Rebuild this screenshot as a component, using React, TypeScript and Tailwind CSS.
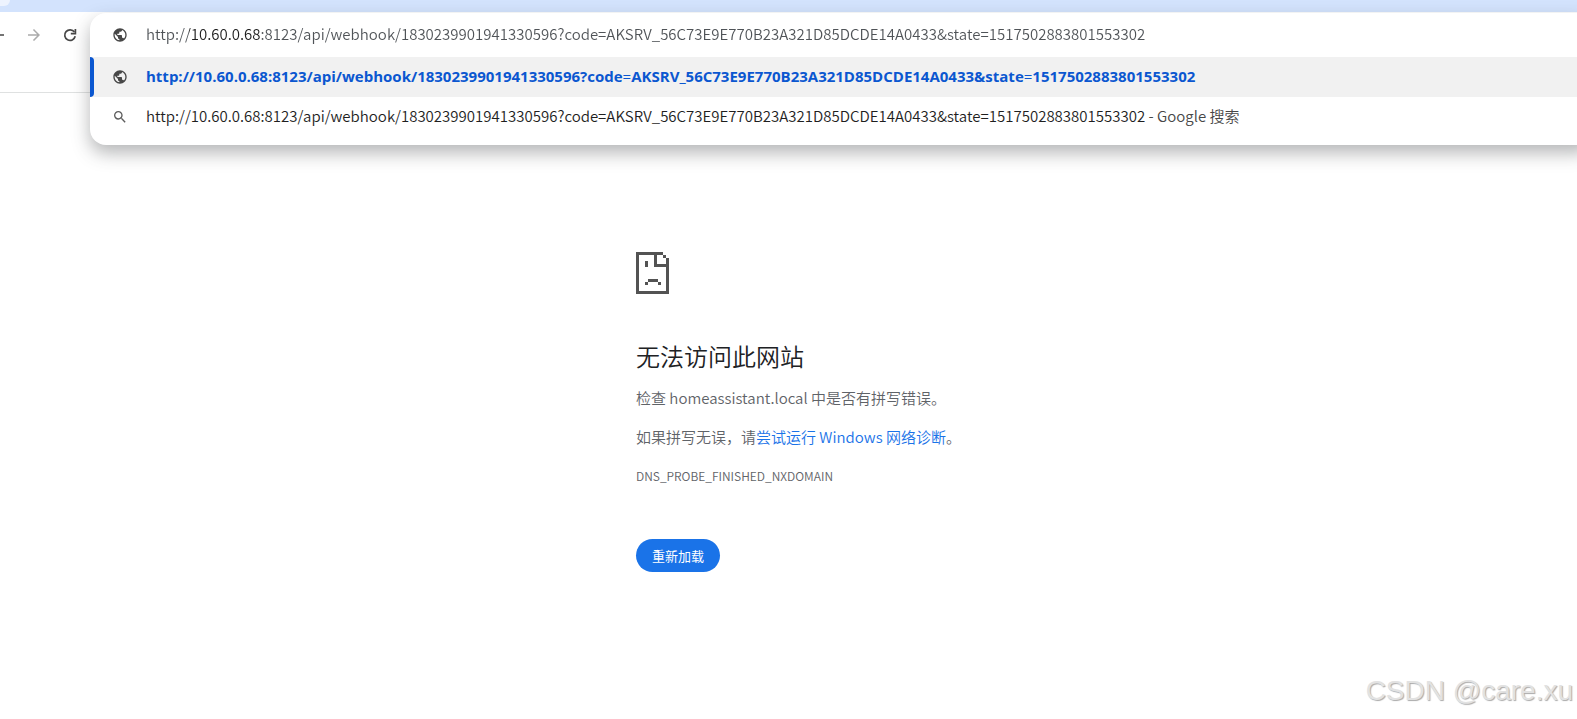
import { useState } from 'react';
import { MdArrowBack, MdArrowForward, MdPublic, MdSearch } from 'react-icons/md';

const TARGET_URL =
  'http://10.60.0.68:8123/api/webhook/1830239901941330596?code=AKSRV_56C73E9E770B23A321D85DCDE14A0433&state=1517502883801553302';

function ReloadIcon() {
  return (
    <svg viewBox="0 0 18 18" className="size-[18px]" fill="none" stroke="currentColor" strokeWidth="1.7">
      <path d="M14.2 10.3A5.3 5.3 0 1 1 13.4 6.1" />
      <path d="M14.4 3v4.6H9.8" />
    </svg>
  );
}

function SadPageIcon() {
  return (
    <svg viewBox="0 0 33 42" className="h-[42px] w-[33px]" fill="#535353" shapeRendering="crispEdges" aria-hidden="true">
      <path d="M0 0h27v3H0zM0 3h3v39H0zM3 39h30v3H3zM30 6h3v33h-3zM27 3h3v3h-3zM18 3h3v9h-3zM18 12h12v3H18z" />
      <path d="M9 9h3v6H9zM12 27h10v3H12zM9 30h3v3H9zM22 30h3v3h-3z" />
    </svg>
  );
}

function BrowserBar() {
  return (
    <header className="relative z-10">
      <div className="h-3 overflow-hidden bg-[#d3e3fd]">
        <div className="h-[6px] w-[10px] rounded-br-[10px] bg-[#edf3fe]" />
      </div>
      <div className="flex h-[81px] items-start border-b border-[#dfe1e1]">
        <nav className="-ml-3 flex items-center gap-[18px] pt-[14px] pl-px" aria-label="导航">
          <button type="button" aria-label="后退" className="text-[#474747]">
            <MdArrowBack size={18} />
          </button>
          <button type="button" aria-label="前进" disabled className="text-[#ababab]">
            <MdArrowForward size={18} />
          </button>
          <button type="button" aria-label="重新加载此页" className="text-[#474747]">
            <ReloadIcon />
          </button>
        </nav>
      </div>
      <Omnibox />
    </header>
  );
}

function Omnibox() {
  const [value, setValue] = useState(TARGET_URL);

  return (
    <div className="absolute top-[13px] -right-4 left-[90px] rounded-2xl bg-white pb-2 text-[15px] leading-5 font-[350] whitespace-nowrap text-[#1f1f1f] shadow-[0_8px_18px_rgba(60,64,67,0.38)]">
      <label className="flex h-11 items-center gap-[18px] pl-[22px]">
        <MdPublic size={16} className="shrink-0 text-[#474747]" />
        {/* the host is darker than the rest of the address */}
        <input
          type="text"
          aria-label="地址和搜索栏"
          value={value}
          onChange={(e) => setValue(e.target.value)}
          className="min-w-0 flex-1 bg-[linear-gradient(to_right,#4f5357_43px,#1f1f1f_43px,#1f1f1f_114px,#4f5357_114px)] bg-clip-text pb-0.5 text-transparent outline-none"
        />
      </label>
      <ul>
        <li className="flex h-10 bg-[#f1f1f1]">
          <span className="w-1 rounded-r bg-[#0b57d0]" />
          <a
            href={TARGET_URL}
            className="flex items-center gap-[18px] pl-[18px] font-['Open_Sans',sans-serif] font-bold text-[#0b57d0]"
          >
            <MdPublic size={16} className="shrink-0 text-[#474747]" />
            <span className="pb-0.5">
              {TARGET_URL.split('=').map((part, i) => (
                <span key={i}>
                  {i > 0 && <span className="font-normal">=</span>}
                  {part}
                </span>
              ))}
            </span>
          </a>
        </li>
        <li className="flex h-10">
          <a href="#search" className="flex items-center gap-[18px] pl-[22px]">
            <MdSearch size={16} className="shrink-0 text-[#5c5c5c]" />
            <span className="pb-0.5">
              {TARGET_URL}
              <span className="text-[#474747]"> - Google 搜索</span>
            </span>
          </a>
        </li>
      </ul>
    </div>
  );
}

function ErrorPage() {
  return (
    <main className="grid grid-cols-[636fr_941fr] pt-[159px] pb-[146px]">
      <div className="col-start-2 text-[15px] leading-6 font-[350] text-[#5f6368]">
        <SadPageIcon />
        <h1 className="mt-[46px] text-2xl leading-8 text-[#202124]">无法访问此网站</h1>
        <p className="mt-[14px]">检查 homeassistant.local 中是否有拼写错误。</p>
        <p className="mt-[15px]">
          如果拼写无误，请
          <a href="#diagnose" className="text-[#1a73e8]">
            尝试运行 Windows 网络诊断
          </a>
          。
        </p>
        <p className="mt-[15px] text-xs leading-6">DNS_PROBE_FINISHED_NXDOMAIN</p>
        <button
          type="button"
          onClick={() => window.location.reload()}
          className="mt-[51px] h-[33px] rounded-full bg-[#1a73e8] px-4 text-[13px] font-normal text-white"
        >
          重新加载
        </button>
      </div>
    </main>
  );
}

export default function App() {
  return (
    <div className="relative min-h-screen overflow-hidden bg-white font-['Noto_Sans_CJK_SC',sans-serif]">
      <BrowserBar />
      <ErrorPage />
      <div className="absolute right-1 bottom-2 font-['Liberation_Sans',sans-serif] text-[28px] leading-10 text-[#e2e2e2] [text-shadow:1px_1px_1px_#aaa]">
        CSDN @care.xu
      </div>
    </div>
  );
}
